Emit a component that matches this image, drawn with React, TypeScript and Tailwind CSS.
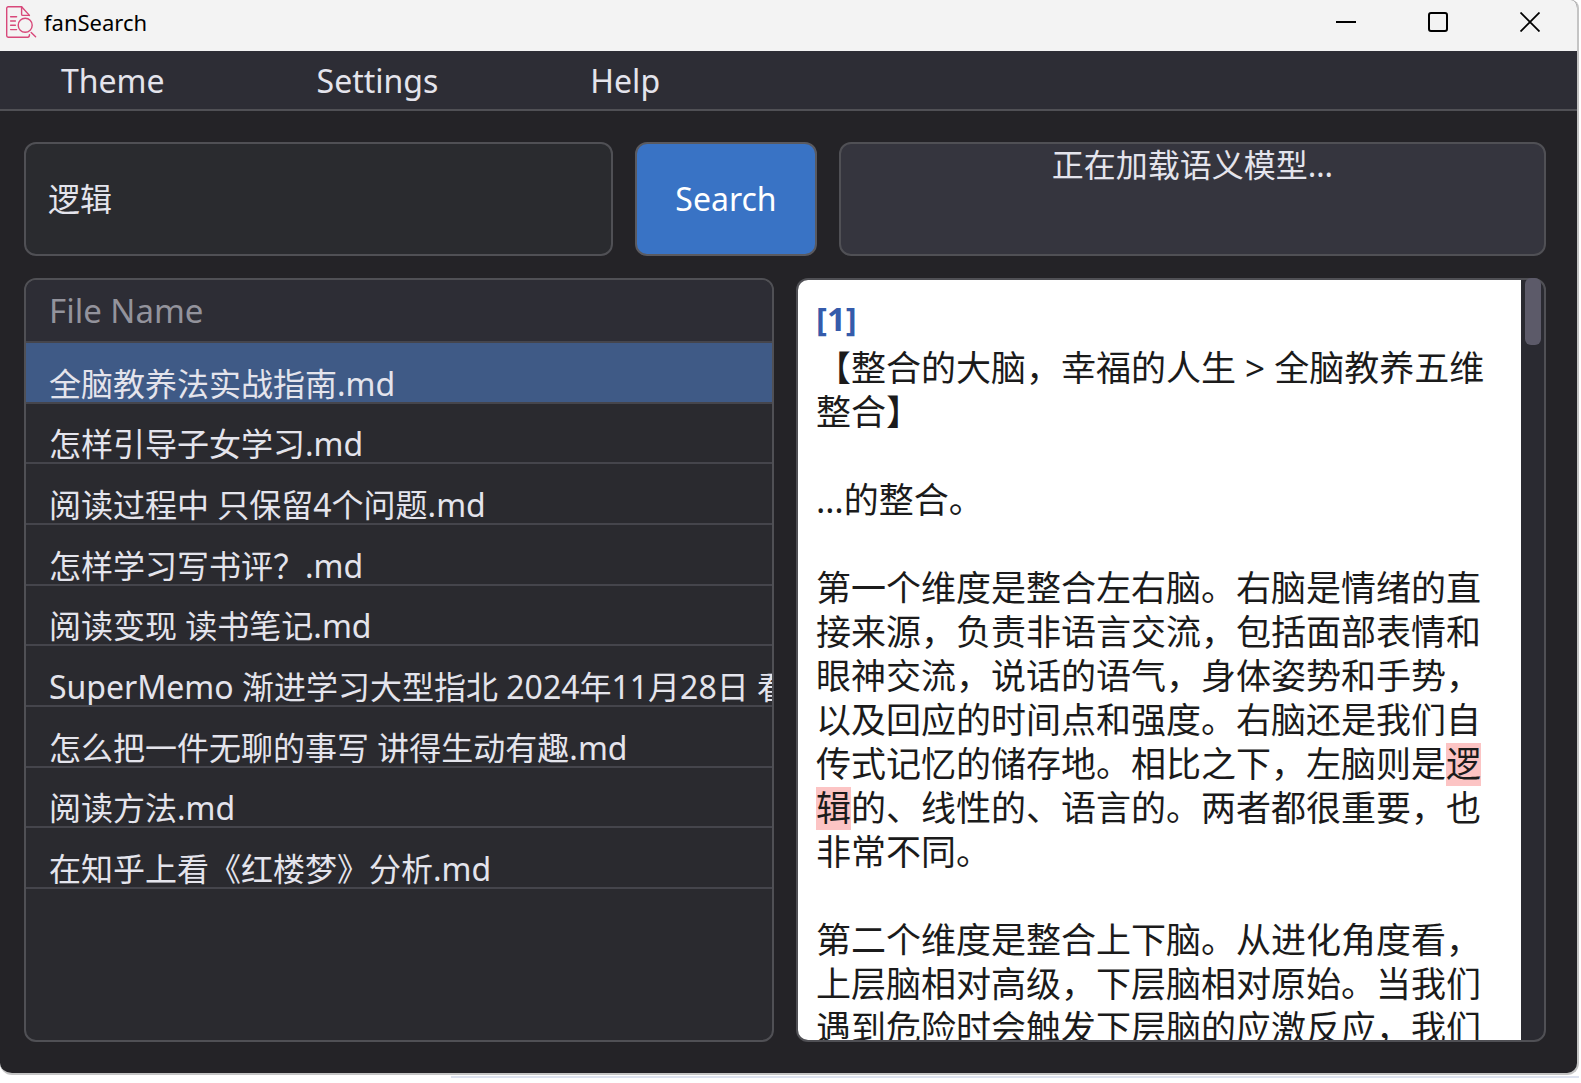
import { useState } from "react";

const MENU = ["Theme", "Settings", "Help"];

const FILES = [
  "全脑教养法实战指南.md",
  "怎样引导子女学习.md",
  "阅读过程中 只保留4个问题.md",
  "怎样学习写书评？.md",
  "阅读变现 读书笔记.md",
  "SuperMemo 渐进学习大型指北 2024年11月28日 看法.md",
  "怎么把一件无聊的事写 讲得生动有趣.md",
  "阅读方法.md",
  "在知乎上看《红楼梦》分析.md",
];

function AppIcon() {
  return (
    <svg
      className="h-8 w-8 shrink-0"
      viewBox="0 0 32 32"
      fill="none"
      stroke="#d8487a"
      strokeWidth="1.4"
      strokeLinecap="round"
      strokeLinejoin="round"
      aria-hidden="true"
    >
      <path d="M23.4 9.4 15.6 .8H2.2C1.3.8.7 1.3.7 2.2v27.6c0 .9.6 1.4 1.5 1.4h19.6c1 0 1.6-.8 1.7-2.6" />
      <path d="M15.6 .8v7.4c0 .8.4 1.2 1.2 1.2h6.6" />
      <path d="M4.6 10.8h6M4.6 15h4.8M4.6 19.2h4.8M4.6 23.6h6" />
      <circle cx="19.2" cy="19.3" r="7" />
      <path d="m25.2 26.4 4.4 4.4" />
    </svg>
  );
}

function TitleBar() {
  return (
    <header className="flex h-[51px] shrink-0 items-center bg-[#f3f3f3] pr-[37px] pb-[7px] pl-1.5 text-black">
      <AppIcon />
      <h1 className="ml-1.5 flex-1 text-[22px] leading-8">fanSearch</h1>
      <div className="flex gap-[72px]">
        <button type="button" aria-label="Minimize">
          <svg className="h-5 w-5" viewBox="0 0 20 20" stroke="#000" strokeWidth="2">
            <path d="M0 10h20" />
          </svg>
        </button>
        <button type="button" aria-label="Maximize">
          <svg className="h-5 w-5" viewBox="0 0 20 20" fill="none" stroke="#000" strokeWidth="2">
            <rect x="1" y="1" width="18" height="18" rx="2" />
          </svg>
        </button>
        <button type="button" aria-label="Close">
          <svg className="h-5 w-5" viewBox="0 0 20 20" stroke="#000" strokeWidth="1.8">
            <path d="m.5.5 19 19M19.5.5l-19 19" />
          </svg>
        </button>
      </div>
    </header>
  );
}

function FileTable() {
  const [selected, setSelected] = useState(0);
  return (
    <section className="overflow-hidden rounded-xl border-2 border-[#505055] bg-[#2a2a2f]">
      <table className="h-[609px] w-full table-fixed border-separate border-spacing-0 text-left">
        <thead>
          <tr className="h-[63px] bg-[#2d2d35]">
            <th className="border-b-2 border-[#45454c] pl-[23px] text-[33px] leading-10 font-normal text-[#93939c]">
              File Name
            </th>
          </tr>
        </thead>
        <tbody>
          {FILES.map((name, i) => (
            <tr
              key={name}
              onClick={() => setSelected(i)}
              className={i === selected ? "bg-[#3f5a86]" : ""}
            >
              <td className="overflow-hidden border-b-2 border-[#45454c] pl-[23px] align-bottom leading-9 whitespace-nowrap">
                {name}
              </td>
            </tr>
          ))}
        </tbody>
      </table>
    </section>
  );
}

function Mark({ children }: { children: string }) {
  return (
    <mark className="bg-[#fcc4c4] py-0.5 font-['Liberation_Sans','Noto_Sans_CJK_SC',sans-serif] leading-10 text-[#1b1b1b]">
      {children}
    </mark>
  );
}

function Preview() {
  return (
    <section className="relative flex min-h-0 rounded-xl border-2 border-[#505055] bg-[#2a2a31]">
      <article className="min-w-0 flex-1 overflow-hidden rounded-l-[10px] bg-white px-[18px] pt-[17px] text-[35px] leading-[44px] text-[#1b1b1b]">
        <h2 className="mb-[5px] text-[33px] font-bold text-[#355bab]">[1]</h2>
        <p className="mb-11">【整合的大脑，幸福的人生 &gt; 全脑教养五维整合】</p>
        <p className="mb-11">…的整合。</p>
        <p className="mb-11">
          第一个维度是整合左右脑。右脑是情绪的直接来源，负责非语言交流，包括面部表情和眼神交流，说话的语气，身体姿势和手势，以及回应的时间点和强度。右脑还是我们自传式记忆的储存地。相比之下，左脑则是
          <Mark>逻辑</Mark>
          的、线性的、语言的。两者都很重要，也非常不同。
        </p>
        <p>
          第二个维度是整合上下脑。从进化角度看，上层脑相对高级，下层脑相对原始。当我们遇到危险时会触发下层脑的应激反应，我们
        </p>
      </article>
      <div className="w-[23px] shrink-0" />
      <div className="absolute -top-0.5 right-[3px] h-[67px] w-4 rounded-md bg-[#5c5a69]" />
    </section>
  );
}

export default function App() {
  const [query, setQuery] = useState("逻辑");
  return (
    <div
      lang="zh-CN"
      className="flex h-screen flex-col overflow-hidden bg-white pr-0.5 font-['Noto_Sans','Noto_Sans_CJK_SC',sans-serif] text-[32px] text-[#e4e4ec] [text-spacing-trim:space-all]"
    >
      <div className="flex min-h-0 flex-1 flex-col overflow-hidden rounded-tr-lg rounded-b-xl border-r-2 border-b-2 border-[#c4c4c4] bg-[#242327]">
        <TitleBar />
        <nav className="flex h-[60px] shrink-0 items-center gap-[152px] border-b-2 border-[#505055] bg-[#2d2d35] pt-0.5 pl-[61px]">
          {MENU.map((item) => (
            <button key={item} type="button" className="leading-10">
              {item}
            </button>
          ))}
        </nav>
        <main className="flex min-h-0 flex-1 flex-col gap-[22px] py-[31px] pr-[31px] pl-6">
          <form
            className="grid h-[114px] shrink-0 grid-cols-[589fr_182px_707fr] gap-[22px]"
            onSubmit={(e) => e.preventDefault()}
          >
            <input
              aria-label="Search query"
              value={query}
              onChange={(e) => setQuery(e.target.value)}
              className="min-w-0 rounded-xl border-2 border-[#505055] bg-[#2a2b2f] px-[22px] outline-none"
            />
            <button
              type="submit"
              className="rounded-xl border-2 border-[#5a5a60] bg-[#3973c5] text-white"
            >
              Search
            </button>
            <output className="block min-w-0 rounded-xl border-2 border-[#505055] bg-[#35353e] text-center leading-[42px]">
              正在加载语义模型…
            </output>
          </form>
          <div className="grid min-h-0 flex-1 grid-cols-2 grid-rows-[minmax(0,1fr)] gap-[22px]">
            <FileTable />
            <Preview />
          </div>
        </main>
      </div>
      <div className="mt-px mb-[5px] ml-[451px] h-0.5 shrink-0 bg-[#dde2ef]" />
    </div>
  );
}
